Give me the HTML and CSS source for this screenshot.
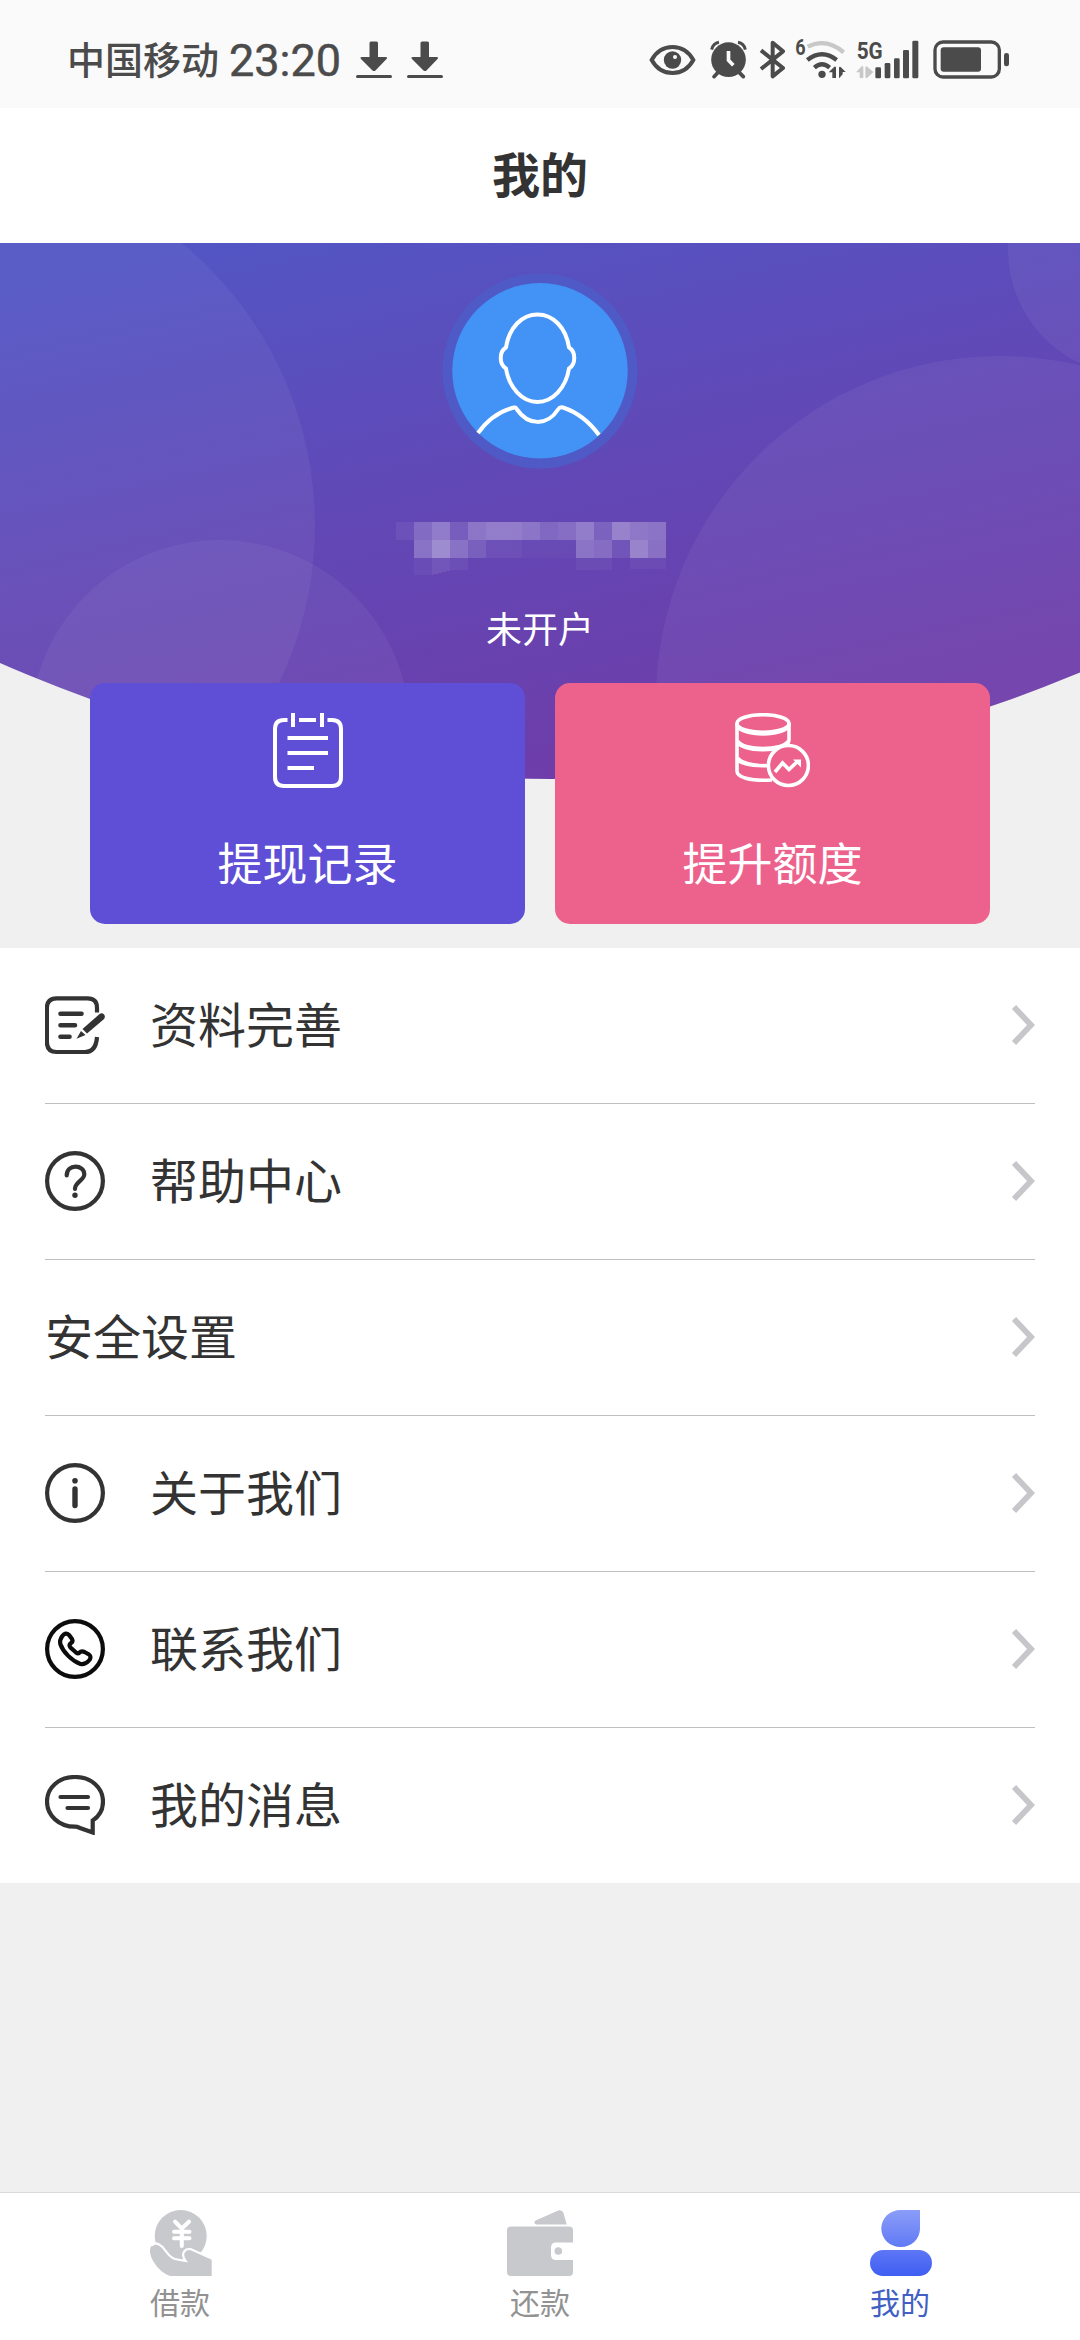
FILE: index.html
```html
<!DOCTYPE html>
<html lang="zh-CN">
<head>
<meta charset="utf-8">
<title>我的</title>
<link rel="stylesheet" href="styles.css">
</head>
<body>
<div class="app">
  <div class="status-bar">
    <span class="carrier">中国移动</span>
    <span class="clock">23:20</span>
    <svg class="download" width="36" height="42" viewBox="0 0 36 42"><path d="M13.5 5q0-1.5 1.5-1.5h5.500q1.500 0 1.500 1.500V19h7.500q2.500 0 1 2L19.500 32.500q-1.500 1.200-3 0L5 21q-1.500-2 1-2h7.500z"/><rect y="37" width="36" height="3" rx="1.500"/></svg>
    <svg class="download" width="36" height="42" viewBox="0 0 36 42"><path d="M13.5 5q0-1.5 1.5-1.5h5.500q1.500 0 1.500 1.500V19h7.500q2.500 0 1 2L19.500 32.500q-1.500 1.200-3 0L5 21q-1.500-2 1-2h7.500z"/><rect y="37" width="36" height="3" rx="1.500"/></svg>
    <div class="indicators">
      <svg class="eye" width="45" height="42" viewBox="90 114 135 126"><path d="M95 180C110 153 132 141 157.500 141S205 153 220 180C205 207 183 219 157.500 219S110 207 95 180z" fill="none" stroke="currentColor" stroke-width="12"/><circle cx="157.500" cy="180" r="26"/><circle class="cutout" cx="165" cy="171" r="6"/></svg>
      <svg class="alarm" width="37" height="42" viewBox="270 114 111 126"><circle cx="325.500" cy="179" r="52"/><path d="M275 149Q279 130 297 127M376 149Q372 130 354 127" fill="none" stroke="currentColor" stroke-width="9"/><path d="M293 218L282 230M358 218L370 230" stroke="currentColor" stroke-width="11" stroke-linecap="round"/><path class="cutline" d="M325.500 153V181L340 196"/></svg>
      <svg class="bluetooth" width="26" height="42" viewBox="419 114 78 126"><path d="M422 151L488 204L457 229V128L488 154L422 207" fill="none" stroke="currentColor" stroke-width="12" stroke-linejoin="round"/></svg>
      <svg class="wifi" width="52" height="42" viewBox="525 114 156 126"><text x="526" y="166" font-size="64" textLength="31" lengthAdjust="spacingAndGlyphs">6</text><g fill="none" stroke="currentColor" stroke-width="13"><path class="faint-line" d="M563 140Q619 112 671 157"/><path d="M562 180Q606 145 650 180"/><path d="M583 203Q606 183 629 203"/></g><circle cx="606" cy="223" r="11"/><path d="M626 217L643 200Q647 198 648 203V234H637V217zM657 203Q658 198 662 201L677 216H668V223L658 234H657z"/></svg>
      <svg class="signal" width="63" height="42" viewBox="708 114 189 126"><text x="710" y="177" font-size="74" textLength="78" lengthAdjust="spacingAndGlyphs">5G</text><path class="faint" d="M708 217L725 199Q730 196 730 203V234H719V217zM736 203Q737 196 742 200L760 216L742 233Q737 237 736 230z"/><rect x="766" y="202" width="17" height="33" rx="4"/><rect x="794" y="189" width="17" height="46" rx="4"/><rect x="822" y="175" width="17" height="60" rx="4"/><rect x="849" y="150" width="18" height="85" rx="4"/><rect x="877" y="122" width="18" height="113" rx="4"/></svg>
      <svg class="battery" width="76" height="42" viewBox="939 114 228 126"><rect x="945" y="126" width="193" height="105" rx="24" fill="none" stroke="currentColor" stroke-width="10"/><rect x="962" y="142" width="121" height="73" rx="9"/><rect x="1152" y="159" width="15" height="40" rx="7"/></svg>
    </div>
  </div>

  <header class="title-bar"><h1>我的</h1></header>

  <section class="profile">
    <svg class="profile-bg" width="1080" height="705" viewBox="0 243 1080 705">
      <defs>
        <linearGradient id="sky" gradientUnits="userSpaceOnUse" x1="330" y1="215" x2="460" y2="800"><stop offset="0" stop-color="#5355c4"/><stop offset=".5" stop-color="#6148b6"/><stop offset="1" stop-color="#6e3da9"/></linearGradient>
        <clipPath id="dome"><circle cx="551" cy="-587" r="1366"/></clipPath>
      </defs>
      <g clip-path="url(#dome)">
        <rect y="243" width="1080" height="540" fill="url(#sky)"/>
        <g class="bubbles"><circle cx="-50" cy="525" r="365"/><circle cx="220" cy="730" r="190"/><circle cx="1000" cy="700" r="344"/><circle cx="1133" cy="250" r="125"/></g>
      </g>
    </svg>
    <svg class="avatar" width="196" height="196" viewBox="442 272.500 196 196">
      <circle cx="540" cy="370.500" r="97.500" fill="#4f5ac6"/><circle cx="540" cy="370.300" r="87.700" fill="#4393f6"/>
      <g fill="none" stroke="#fff" stroke-width="4" stroke-linejoin="round"><path d="M506 347C509 327 522 314 537.500 314S566 327 569 347C576 351 576 364 569 368C566 387 553 401.500 537.500 401.500S509 387 506 368C499 364 499 351 506 347z"/><path d="M478 432.500Q493 412 514 407Q516 406.500 517 409C528 425 547 426 558 409Q560 406 563 407Q584 414 599 434.500"/></g>
    </svg>
    <svg class="masked-name" width="270" height="54" viewBox="0 0 15 3" preserveAspectRatio="none" shape-rendering="crispEdges" fill="#fff">
      <g><rect width="1" height="1" opacity=".06"/><rect x="1" width="1" height="1" opacity=".2"/><rect x="2" width="1" height="1" opacity=".29"/><rect x="3" width="1" height="1" opacity=".13"/><rect x="4" width="1" height="1" opacity=".26"/><rect x="5" width="2" height="1" opacity=".3"/><rect x="7" width="1" height="1" opacity=".26"/><rect x="8" width="1" height="1" opacity=".19"/><rect x="9" width="1" height="1" opacity=".22"/><rect x="10" width="1" height="1" opacity=".3"/><rect x="11" width="1" height="1" opacity=".16"/><rect x="12" width="1" height="1" opacity=".33"/><rect x="13" width="1" height="1" opacity=".27"/><rect x="14" width="1" height="1" opacity=".25"/></g>
      <g><rect x="1" y="1" width="1" height="1" opacity=".24"/><rect x="2" y="1" width="1" height="1" opacity=".38"/><rect x="3" y="1" width="1" height="1" opacity=".24"/><rect x="4" y="1" width="1" height="1" opacity=".14"/><rect x="5" y="1" width="2" height="1" opacity=".06"/><rect x="7" y="1" width="3" height="1" opacity=".03"/><rect x="10" y="1" width="1" height="1" opacity=".25"/><rect x="11" y="1" width="1" height="1" opacity=".22"/><rect x="12" y="1" width="1" height="1" opacity=".09"/><rect x="13" y="1" width="1" height="1" opacity=".34"/><rect x="14" y="1" width="1" height="1" opacity=".24"/></g>
      <g><rect x="1" y="2" width="1" height=".95" opacity=".04"/><path d="M2 2H3V2.700L2 2.950z" opacity=".09"/><rect x="3" y="2" width="1" height=".65" opacity=".05"/><rect x="10" y="2" width="2" height=".65" opacity=".04"/><rect x="13" y="2" width="2" height=".6" opacity=".04"/></g>
    </svg>
    <p class="account-state">未开户</p>
    <div class="cards">
      <div class="card card-records">
        <svg width="75" height="75" viewBox="0 0 75 75" fill="none" stroke="#fff" stroke-width="4"><path d="M17.500 7H14Q5 7 5 16V64Q5 73 14 73H62Q71 73 71 64V16Q71 7 62 7H57.500M29 7H46M23 0V14M52 0V14M17.500 25H58M17.500 40H58M17.500 55H44"/></svg>
        <span>提现记录</span>
      </div>
      <div class="card card-limit">
        <svg width="75" height="75" viewBox="0 0 75 75" fill="none" stroke="#fff" stroke-width="3.600"><ellipse cx="28" cy="10.500" rx="26" ry="8.800"/><path d="M2 12C4 24 52 24 54 12" stroke-width="3.400"/><path d="M2 10V27C2 40 54 40 54 27V10M2 24V44C2 50 14 53.500 35 52.500M2 42V58C2 64 14 68.500 37 67"/><path d="M3 28C8 37.500 48 37.500 53 28M3 45C8 51.500 20 52.500 34 52.500" stroke-width="3"/><circle cx="53.400" cy="52.500" r="20" fill="#ed628c"/><path d="M40 59L47.500 50L54 56.500L63 48"/><path d="M58 46.500H66V54.500z" fill="#fff" stroke="none"/></svg>
        <span>提升额度</span>
      </div>
    </div>
  </section>

  <nav class="menu">
    <a class="menu-item">
      <svg class="menu-icon" width="60" height="60" viewBox="0 0 60 60"><path stroke-linecap="butt" d="M52 17.500V13Q52 3.300 42.500 3.300H11.500Q1.900 3.300 1.900 13V47Q1.900 57 11.500 57H40Q51 57 52 42"/><path d="M15.500 18.700H36.500M15.500 30.300H30M15.500 41.700H24.500" stroke-width="4.600"/><path class="solid" d="M54 19.500Q57 17 59 19.500Q61 22 58.500 24.500L42 38.500L37.500 34zM36 36L40.500 40L31.500 43.800z"/></svg>
      <span>资料完善</span><svg class="chevron" width="24" height="42" viewBox="0 0 24 42"><path d="M3 3L20 21L3 39"/></svg>
    </a>
    <a class="menu-item">
      <svg class="menu-icon" width="60" height="60" viewBox="0 0 60 60"><circle cx="30" cy="30" r="27.900"/><path d="M21.700 24.500C21.500 12.500 39.500 13 39.300 23.500C39.200 29 30 31.500 30 37.500V38"/><circle class="solid" cx="30" cy="44.200" r="2.700"/></svg>
      <span>帮助中心</span><svg class="chevron" width="24" height="42" viewBox="0 0 24 42"><path d="M3 3L20 21L3 39"/></svg>
    </a>
    <a class="menu-item">
      <span>安全设置</span><svg class="chevron" width="24" height="42" viewBox="0 0 24 42"><path d="M3 3L20 21L3 39"/></svg>
    </a>
    <a class="menu-item">
      <svg class="menu-icon" width="60" height="60" viewBox="0 0 60 60"><circle cx="30" cy="30" r="27.900"/><path d="M30 26V42.500" stroke-width="5.400"/><circle class="solid" cx="30" cy="17.700" r="2.800"/></svg>
      <span>关于我们</span><svg class="chevron" width="24" height="42" viewBox="0 0 24 42"><path d="M3 3L20 21L3 39"/></svg>
    </a>
    <a class="menu-item">
      <svg class="menu-icon contact" width="60" height="60" viewBox="0 0 60 60"><circle cx="30" cy="30" r="27.900"/><path d="M17 17.500Q20.500 12.500 24 16L27 20Q28.500 22.500 25.500 24.500Q23.500 26 25.500 28.500L31 33.500Q33.500 35.500 34.500 33.500Q36.500 31.500 39.500 33L44 35.500Q47 38 44 41.500Q40 46 35.500 45C27 42 18 33 15.300 25Q14.500 21 17 17.500z"/></svg>
      <span>联系我们</span><svg class="chevron" width="24" height="42" viewBox="0 0 24 42"><path d="M3 3L20 21L3 39"/></svg>
    </a>
    <a class="menu-item">
      <svg class="menu-icon" width="60" height="60" viewBox="0 0 60 60"><path d="M30 2C14 2 2 12.500 2 26.500S14 51.700 30 51.700Q32 51.700 35 53L47.700 57.500V45.500C54 41.500 58 35 58 26.500C58 12.500 46 2 30 2zM15.500 22H43M22.500 33H43"/></svg>
      <span>我的消息</span><svg class="chevron" width="24" height="42" viewBox="0 0 24 42"><path d="M3 3L20 21L3 39"/></svg>
    </a>
  </nav>

  <footer class="tab-bar">
    <a class="tab">
      <svg width="66" height="66" viewBox="0 0 66 66"><circle cx="33.700" cy="26" r="26" fill="#c8c9cd"/><path d="M28 11.700L34.800 18.500L42 11.700M34.800 18V36M27 21.700H42.500M27 28.300H42.500" fill="none" stroke="#fff" stroke-width="4" stroke-linecap="round" stroke-linejoin="round"/><path d="M3 41C3 34 9 33 13 36.500C18 40 21 47 27 49.200Q32 50.500 38 51C33 44 38 38.500 44 40L64.700 49.500V66H24C14 64 3 50 3 41z" fill="#c8c9cd"/><path d="M5 35.500C8 31.500 12 34 15.500 37C20 42 22 47.500 28 49Q33 50 38.500 50.800C33 43.500 38 38 44 39.200L66 49" fill="none" stroke="#fff" stroke-width="2.200"/></svg>
      <span>借款</span>
    </a>
    <a class="tab">
      <svg width="66" height="66" viewBox="0 0 66 66" fill="#c8c9cd"><path d="M29 14.500Q26 13 28.500 10.500L52 .3Q55-.5 56.500 3L59.700 14.500zM4 16.500H62Q66 16.500 66 20.500V32.500H49Q44 32.500 44 37.500V45Q44 50 49 50H66V62Q66 66 62 66H4Q0 66 0 62V20.500Q0 16.500 4 16.500z"/><circle cx="51.300" cy="41" r="3.800"/></svg>
      <span>还款</span>
    </a>
    <a class="tab tab-active">
      <svg width="66" height="66" viewBox="0 0 66 66"><defs><linearGradient id="person" gradientUnits="userSpaceOnUse" x1="0" y1="0" x2="0" y2="66"><stop offset="0" stop-color="#8b9df8"/><stop offset="1" stop-color="#3f5ef3"/></linearGradient></defs><g fill="url(#person)"><path d="M53 0V18.500C53 29 44.500 37 33.700 37S14.300 29 14.300 18.500S23 0 33.700 0z"/><rect x="3" y="40" width="62" height="26" rx="13"/></g></svg>
      <span>我的</span>
    </a>
  </footer>
</div>
</body>
</html>
```

FILE: styles.css
```css
* { box-sizing: border-box; }
body {
  margin: 0;
  background: #f0f0f0;
  color: #333;
  font-family: "Noto Sans CJK SC", "Noto Sans", sans-serif;
}
svg { display: block; flex: none; }
.app { display: flex; flex-direction: column; width: 1080px; height: 2340px; }

.status-bar {
  display: flex;
  align-items: flex-start;
  height: 108px;
  padding: 38px 71px 0 67px;
  background: #fafafa;
  color: #4b4b4b;
  fill: currentColor;
}
.carrier { width: 153px; font-size: 38px; font-weight: 500; line-height: 40px; white-space: nowrap; }
.clock { width: 120px; margin-left: 9px; font: 400 45px/45px Roboto, sans-serif; -webkit-text-stroke: .5px currentColor; }
.download { margin-left: 7px; }
.download + .download { margin-left: 15px; }
.indicators { display: flex; margin-left: auto; font-family: Roboto, sans-serif; font-weight: 700; }
.indicators svg { overflow: visible; }
.alarm { margin-left: 15px; }
.bluetooth { margin-left: 13px; }
.wifi { margin-left: 9px; }
.signal { margin-left: 9px; }
.battery { margin-left: 14px; }
.cutout { fill: #fafafa; }
.cutline { fill: none; stroke: #fafafa; stroke-width: 11px; }
.faint { fill: #c8c8c8; }
.faint-line { stroke: #c8c8c8; }

.title-bar { display: flex; align-items: center; justify-content: center; height: 135px; padding-bottom: 7px; background: #fff; }
.title-bar h1 { margin: 0; font-size: 48px; font-weight: 700; line-height: 72px; }

.profile { position: relative; display: flex; flex-direction: column; align-items: center; height: 705px; padding-top: 30px; color: #fff; }
.profile-bg { position: absolute; top: 0; left: 0; z-index: -1; }
.bubbles { fill: #fff; fill-opacity: .05; }
.masked-name { margin: 53px 18px 0 0; }
.account-state { margin: 24px 0 0; font-size: 36px; line-height: 54px; }
.cards { display: flex; gap: 30px; margin-top: 29px; }
.card { display: flex; flex-direction: column; align-items: center; width: 435px; height: 241px; padding-top: 30px; border-radius: 15px; font-size: 45px; }
.card span { margin-top: 44px; line-height: 60px; }
.card-records { background: #5f4fd7; }
.card-limit { background: #ed628c; }

.menu { padding: 0 45px; background: #fff; }
.menu-item { display: flex; align-items: center; height: 156px; padding-bottom: 1px; border-bottom: 1px solid #bfbfbf; font-size: 48px; }
.menu-item:last-child { height: 155px; border-bottom: 0; }
.menu-item span { padding-bottom: 6px; }
.menu-icon { margin-right: 45px; fill: none; stroke: #333; stroke-width: 4.2px; stroke-linecap: round; }
.contact { stroke: #0c0c0c; }
.solid { fill: #333; stroke: none; }
.chevron { margin-left: auto; fill: none; stroke: #c7c7cb; stroke-width: 5.8px; }

.tab-bar { display: flex; height: 148px; margin-top: auto; border-top: 1px solid #d9d9d9; background: #fff; }
.tab { display: flex; flex: 1; flex-direction: column; align-items: center; padding-top: 17px; color: #929292; font-size: 30px; }
.tab span { margin-top: 3px; line-height: 44px; }
.tab-active { color: #425fc4; }
```
